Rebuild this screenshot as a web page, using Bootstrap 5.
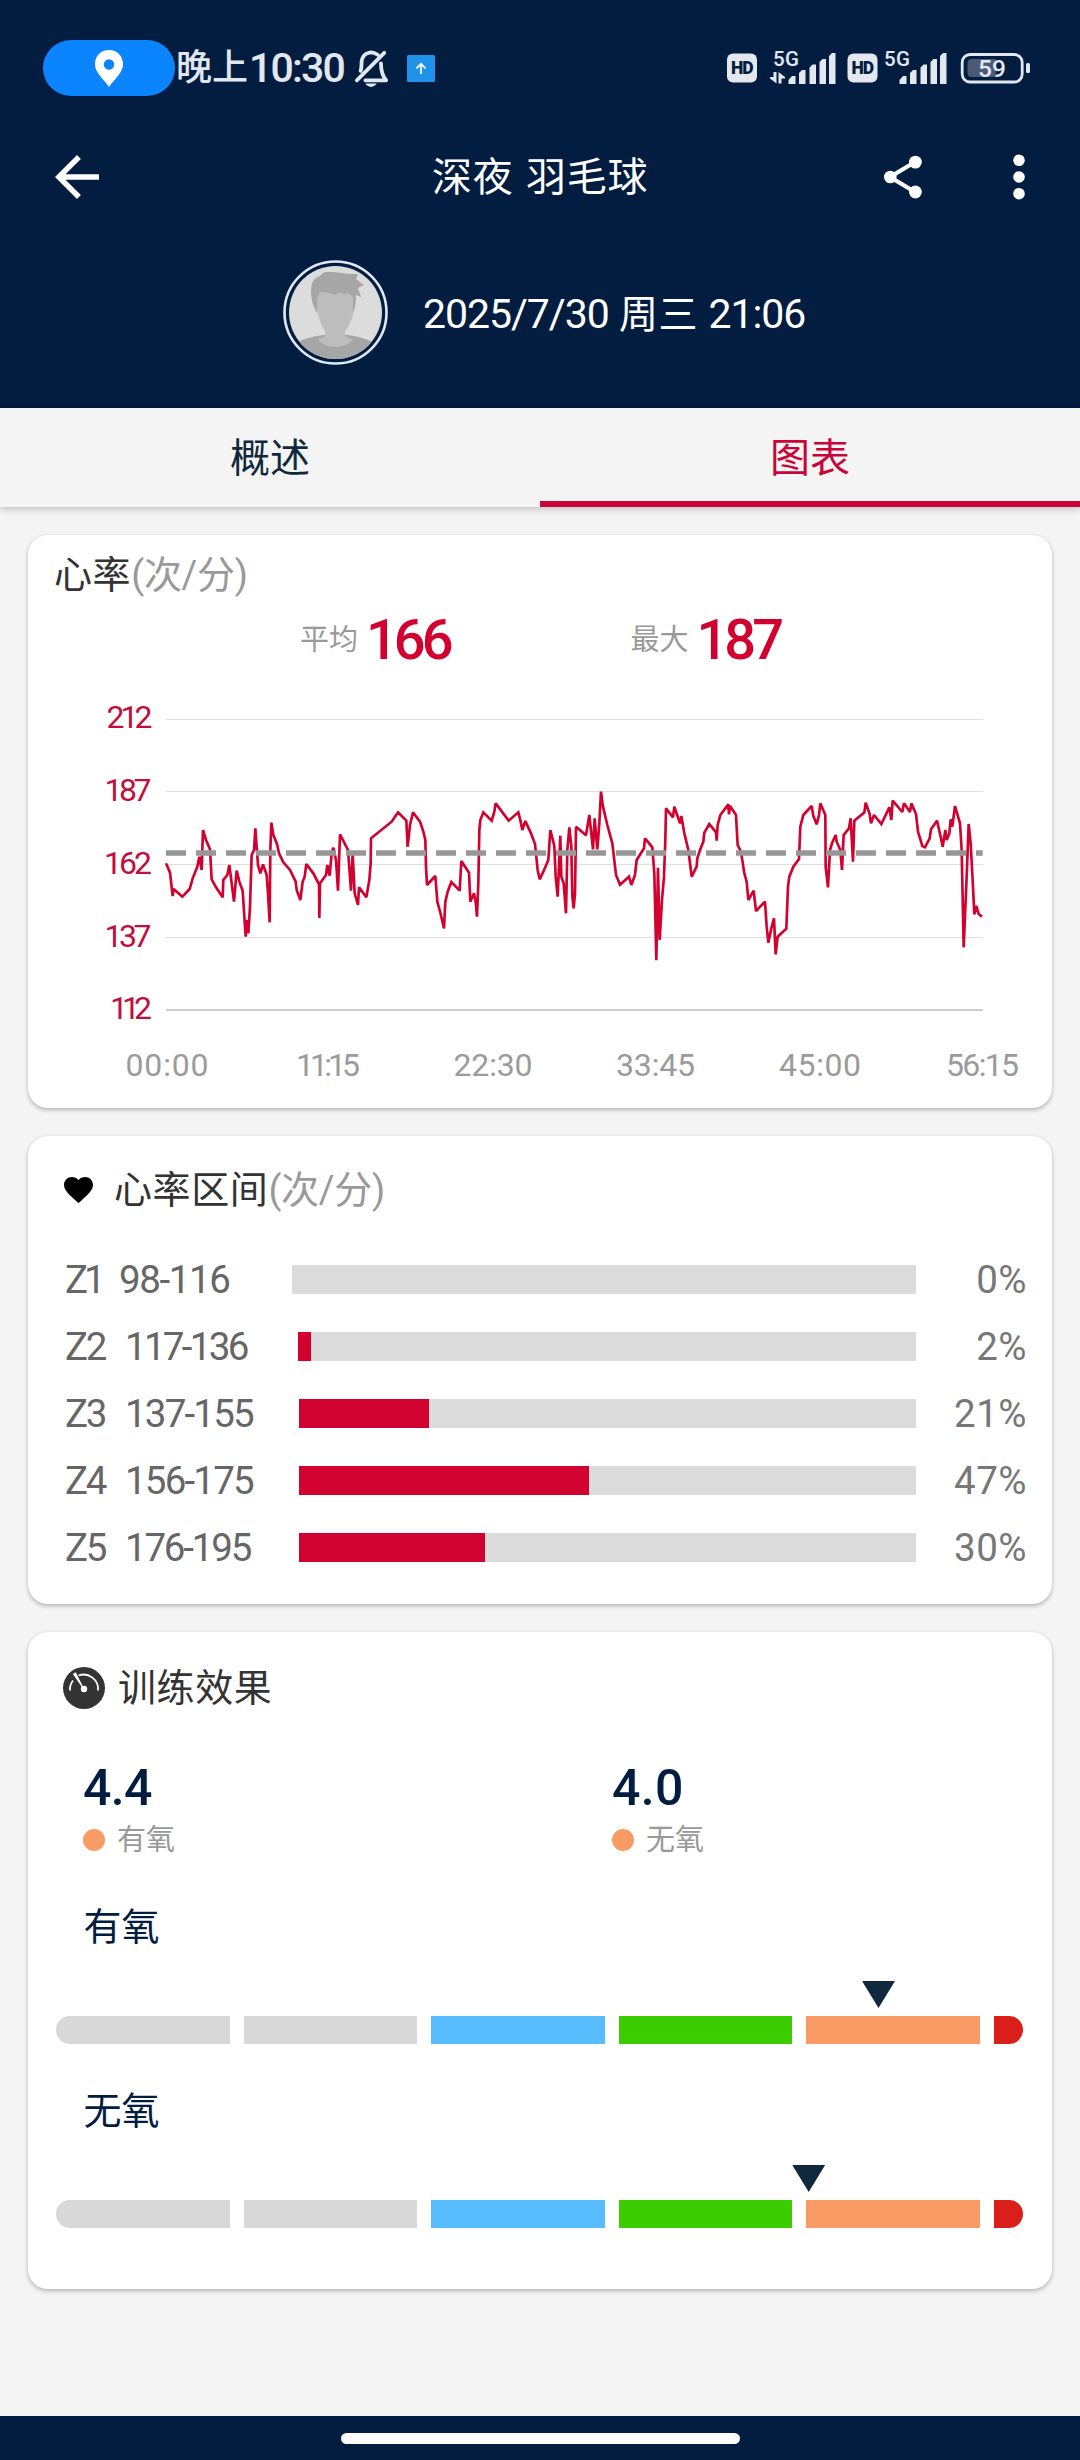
<!DOCTYPE html>
<html lang="zh-CN">
<head>
<meta charset="utf-8">
<meta name="viewport" content="width=device-width, initial-scale=1">
<title>深夜 羽毛球</title>
<link href="https://cdn.jsdelivr.net/npm/bootstrap@5.3.0/dist/css/bootstrap.min.css" rel="stylesheet">
<style>
  :root { --navy:#021d40; --crimson:#d1022f; --ink:#333; --mute:#999; }
  body { background:#f4f4f4; font-family:Roboto,"Noto Sans CJK SC",sans-serif; color:var(--ink); width:1080px; height:2460px; overflow:hidden; }
  svg { display:block; flex:none; overflow:visible; }
  .hero { background:var(--navy); height:408px; color:#fff; }
  .statusbar { height:136px; padding:0 50px 0 43px; color:#e2e7ef; }
  .loc-pill { width:132px; height:56px; border-radius:28px; background:#0a84ff; }
  .clock { font-size:36px; font-weight:500; line-height:44px; margin-left:1px; width:170px; white-space:nowrap; }
  .clock span { font-size:41px; letter-spacing:-1.8px; margin-left:1px; }
  .appbar { height:82px; padding:0 46px 0 44px; }
  .appbar-title { font-size:40px; line-height:48px; letter-spacing:.7px; word-spacing:2px; font-weight:400; margin-left:322px; padding-top:1px; }
  .profile { height:190px; padding:42px 0 0 283px; }
  .when { font-size:39px; line-height:48px; margin-left:35px; padding-top:30px; letter-spacing:.6px; }
  .when span { font-size:41px; letter-spacing:-1.05px; }
  .tabs .tab-item { height:99px; font-size:40px; line-height:101px; color:#10293c; }
  .tabs { box-shadow:0 2px 7px rgba(0,0,0,.22); background:#f4f4f4; height:99px; position:relative; }
  .tabs .tab-item.active { color:#cb0437; border-bottom:6px solid #cb0437; }
  .panels { padding:28px 28px 0; height:1909px; }
  .panel { background:#fff; border-radius:20px; box-shadow:0 2px 4px rgba(0,0,0,.26),0 0 2px rgba(0,0,0,.06); }
  .p-hr { height:573px; padding-top:18px; }
  .p-zone { height:468px; margin-top:28px; padding:32px 25px 0 37px; }
  .p-te { height:657px; margin-top:28px; padding:34px 29px 0 28px; }
  .ttl { font-size:38px; line-height:44px; letter-spacing:.6px; font-weight:400; }
  .unit { color:var(--mute); letter-spacing:-.3px; }
  .stats { height:84px; gap:181px; margin-top:1px; }
  .stats small { font-size:29px; color:var(--mute); line-height:40px; }
  .stats strong { font-size:56px; font-weight:500; color:var(--crimson); letter-spacing:-4px; line-height:60px; margin-left:8px; }
  .zrow { height:67px; font-size:38.5px; color:#666; line-height:44px; }
  .zrow span { padding-top:1px; }
  .zname { letter-spacing:-2.4px; width:60px; white-space:nowrap; }
  .zrange { letter-spacing:-1.8px; width:174px; white-space:nowrap; }
  .zrow.z1 .zname { width:54px; letter-spacing:-4px; } .zrow.z1 .zrange { width:173px; letter-spacing:-1.4px; }
  .zrow.z2 .zrange { width:173px; letter-spacing:-2.7px; }
  .zrow.z5 .zrange { letter-spacing:-2.2px; }
  .zbar { height:29px; background:#dbdbdb; }
  .zbar div { height:29px; background:var(--crimson); }
  .zpct { width:111px; text-align:right; color:#777; letter-spacing:.5px; }
  .te-item { width:529px; }
  .te-val { font-size:50px; font-weight:500; line-height:60px; color:var(--navy); letter-spacing:-.6px; }
  .te-item + div .te-val { letter-spacing:.4px; }
  .te-sub { font-size:29px; line-height:40px; color:var(--mute); margin-top:1px; gap:12px; padding-top:1px; }
  .te-dot { width:22px; height:22px; border-radius:50%; background:#f89b65; }
  .te-name { color:var(--navy); font-size:38px; line-height:44px; padding-left:27.5px; }
  .meter { gap:14px; margin-top:8px; }
  .meter div { height:28px; flex:1 1 0; }
  .meter div:first-child { border-radius:14px 0 0 14px; }
  .meter div:last-child { flex:0 0 29px; background:#da1e19; border-radius:0 14px 14px 0; }
  .s-gray { background:#d8d8d8; } .s-blue { background:#57bdff; } .s-green { background:#3ccd00; } .s-orange { background:#f99a65; }
  .pointer { width:33px; height:27px; background:#10293c; clip-path:polygon(0 0,100% 0,50% 100%); margin-top:32px; transform:translateX(-50%); }
  .navbar-home { height:44px; background:var(--navy); padding-top:17px; }
  .navbar-home div { width:399px; height:11px; border-radius:6px; background:#fff; }
</style>
</head>
<body>
<header class="hero">
  <div class="statusbar d-flex align-items-center">
    <div class="loc-pill d-flex align-items-center justify-content-center">
      <svg width="28" height="37" viewBox="0 0 28 37"><path fill="#fff" fill-rule="evenodd" d="M14 0C6 0 0 6 0 14c0 9 8 14 14 23C20 28 28 23 28 14 28 6 22 0 14 0zm0 9.300a5.200 5.200 0 1 1 0 10.400 5.200 5.200 0 0 1 0-10.400z"/></svg>
    </div>
    <div class="clock d-flex align-items-center">晚上<span>10:30</span></div>
    <svg class="ms-2" width="35" height="38" viewBox="0 0 37 40" fill="none" stroke="#e2e7ef" stroke-width="4" stroke-linecap="round" stroke-linejoin="round"><path d="M3 33L32 4M7 23c1-3 1-5 1-8C8 8 12 4 18 3.500c3 0 5 1 7 2.500M28.500 15c0 8 1 13 5.500 18H12"/><path fill="#e2e7ef" stroke="none" d="M12 36.500h12c-1 2-3.500 3.500-6 3.500s-5-1.500-6-3.500z"/></svg>
    <svg style="margin-left:18px" width="28" height="27" viewBox="0 0 28 27"><rect width="28" height="27" rx="1.500" fill="#1f93e9"/><path d="M14 19V9M9.500 13.300L14 8.800l4.500 4.500" fill="none" stroke="#fff" stroke-width="1.700"/></svg>
    <svg class="ms-auto" width="303" height="40" viewBox="727 48 303 40" fill="#e4e8ee">
      <rect x="727" y="53.500" width="30" height="29" rx="6"/>
      <rect x="847.500" y="53.500" width="30" height="29" rx="6"/>
      <g font-family="Roboto" font-weight="900" font-size="17.500" fill="#021d40"><text x="731" y="74" textLength="22.500">HD</text><text x="851.500" y="74" textLength="22.500">HD</text></g>
      <g font-family="Roboto" font-weight="500" font-size="20.500"><text x="773" y="66" textLength="26">5G</text><text x="884" y="66" textLength="26">5G</text></g>
      <path d="M773.500 72h3v11.500l-6.500-5v-1.500h3.500zM778.500 72l6.500 5v1.500h-3.500v5h-3z"/>
      <g id="bars"><path d="M788.500 84v-4l3.500-4h3.500v8zM799 84V73l3-3h3.500v14zM809.500 84V67.500l3-3h3.500V84zM819.500 84V62l3-3h3.500v25zM829 84V56l3-3h3.500v31z"/></g>
      <use href="#bars" x="111"/>
      <rect x="962.200" y="54.500" width="60" height="27.500" rx="8" fill="none" stroke="#e4e8ee" stroke-width="2.800"/>
      <path d="M971.500 59H996v18h-24.500a4 4 0 0 1-4-4V63a4 4 0 0 1 4-4z" fill="#4b5a76"/>
      <rect x="1026" y="63" width="4" height="10" rx="1.500"/>
      <text x="978" y="77" font-family="Roboto" font-weight="500" font-size="24.500" textLength="28">59</text>
    </svg>
  </div>
  <div class="appbar d-flex align-items-center">
    <svg width="66" height="66" viewBox="0 0 24 24" fill="#fff"><path d="M20 11H7.830l5.590-5.590L12 4l-8 8 8 8 1.410-1.410L7.830 13H20z"/></svg>
    <h1 class="appbar-title mb-0">深夜 羽毛球</h1>
    <svg class="ms-auto" width="38" height="44" viewBox="0 0 38 44"><g fill="#fff"><circle cx="6.300" cy="22" r="6.300"/><circle cx="31.400" cy="7.100" r="6.400"/><circle cx="31.400" cy="37" r="6.400"/></g><path d="M31 7L6 22l25 15" fill="none" stroke="#fff" stroke-width="4.200"/></svg>
    <svg style="margin-left:82px" width="30" height="46" viewBox="0 0 30 46" fill="#fff"><circle cx="15" cy="6.300" r="5.800"/><circle cx="15" cy="23" r="5.800"/><circle cx="15" cy="39.700" r="5.800"/></svg>
  </div>
  <div class="profile d-flex">
    <svg width="105" height="105" viewBox="0 0 105 105">
      <clipPath id="face"><circle cx="52.500" cy="52.500" r="46.500"/></clipPath>
      <circle cx="52.500" cy="52.500" r="51" fill="none" stroke="#dfe9f6" stroke-width="2.600"/>
      <g clip-path="url(#face)">
        <rect width="105" height="105" fill="#dcdcdc"/>
        <path fill="#a6a6a6" d="M10 85c8-6 18-8 30-10h25c12 2 20 4 30 10v20H10z"/>
        <path fill="#bdbdbd" d="M33 35c0-5 5-10 19-10s20 4 20 12c0 14-3 26-10 34v5c2 2 5 2 8 3-3 5-10 8-18 8s-14-3-17-8c2-1 5-1 7-3v-5C36 62 33 50 33 35z"/>
        <path fill="#a6a6a6" d="M34 53c-3-5-6-12-6-22 0-9 3-13 9-15 3-5 7-4 13-4 8 1 15 2 25 2l-2 5 8 6-6 3 3 9-5-2c0 8-1 13-3 18V37c-2-2-4-4-7-4l-1 2c-3-2-5-3-8-2l-1 2c-5-2-10-3-16-3-3 4-3 11-3 21z"/>
      </g>
    </svg>
    <div class="when"><span>2025/7/30</span> 周三 <span>21:06</span></div>
  </div>
</header>
<nav class="tabs d-flex text-center">
  <div class="tab-item w-50">概述</div>
  <div class="tab-item active w-50">图表</div>
</nav>
<main class="panels">
  <section class="panel p-hr">
    <h2 class="ttl mb-0" style="padding-left:26px">心率<span class="unit">(次/分)</span></h2>
    <div class="stats d-flex justify-content-center">
      <div class="d-flex align-items-center"><small>平均</small><strong>166</strong></div>
      <div class="d-flex align-items-center"><small>最大</small><strong>187</strong></div>
    </div>
    <svg width="1024" height="426" viewBox="28 682 1024 426">
      <g stroke="#dfe1e1" stroke-width="1" shape-rendering="crispEdges"><path d="M166 719.500H982.700M166 791.500H982.700M166 864.500H982.700M166 937.500H982.700"/></g>
      <path d="M166 1010H982.700" stroke="#cbcbcb" stroke-width="2"/>
      <g font-family="Roboto" font-size="32" fill="#c30d3b">
        <text x="106.500" y="728" textLength="46">212</text>
        <text x="104.500" y="801" textLength="47">187</text>
        <text x="104" y="874" textLength="48">162</text>
        <text x="104.500" y="947" textLength="47">137</text>
        <text x="110" y="1019" textLength="42">112</text>
      </g>
      <g font-family="Roboto" font-size="32" fill="#9b9b9b">
        <text x="125.500" y="1076" textLength="83">00:00</text>
        <text x="296" y="1076" textLength="64">11:15</text>
        <text x="453.500" y="1076" textLength="79">22:30</text>
        <text x="616" y="1076" textLength="79">33:45</text>
        <text x="779" y="1076" textLength="82">45:00</text>
        <text x="946" y="1076" textLength="73">56:15</text>
      </g>
      <g transform="translate(80 690) scale(.33333)" fill="none" stroke="#d1022f" stroke-width="8" stroke-miterlimit="2">
        <polyline points="258,520 270,548 278,618 281,597 307,620 329,597 338,565 352,530 358,500 365,540 369,420 378,450 390,478 395,568 408,592 428,622 430,570 442,555 448,525 462,635 470,542 478,575 488,602 497,740 502,690 505,730 510,650 515,495 522,480 526,415 534,525 541,550 549,523 560,555 564,610 569,697 571,480 574,398 580,435 591,462 597,490 610,517 630,540 647,575 650,600 661,630 668,575 674,560 679,522 700,550 717,583 718,684 720,580 738,555 742,525 749,557 755,490 760,473 768,510 774,602 780,433 804,480 813,602 818,490 824,610 834,645 837,592 859,622 868,570 872,520 873,445 935,395 954,367 979,392 983,470"/>
        <polyline transform="translate(870 0)" points="113,470 120,405 129,367 150,395 160,425 166,450 168,530 171,585 196,558 202,635 212,672 222,715 226,635 233,605 244,576 269,602 274,513 297,548 301,635 312,610 317,635 321,680 325,580 328,420 331,390 340,367 365,392 373,365 377,340 416,392 445,367 452,395 457,420 466,393 483,430 495,462 503,540 509,568 520,545 535,510 541,420 553,468 557,560 563,620 571,437 574,560 581,580 588,670 592,480 598,412 604,470 607,620 611,655 615,610 618,410 648,436 658,375 669,478 674,385 682,478 688,400 693,305 699,350 712,405 727,460 738,555 750,584 777,560 784,585 795,555 800,510 822,475 825,445 847,472 853,550 859,811 864,533 869,750 876,630 882,560 886,450 888,355 909,382 913,350"/>
        <polyline transform="translate(1770 0)" points="13,350 30,400 34,378 43,430 55,480 65,560 80,530 82,505 90,480 100,455 103,428 118,402 138,427 140,452 143,405 151,375 175,343 177,373 180,348 198,375 203,465 213,485 223,550 230,575 235,630 251,602 258,663 285,635 290,710 295,758 304,715 312,685 317,793 323,740 349,716 354,590 358,560 370,530 387,507 391,410 400,375 425,348 430,378 440,403 447,375 451,340 466,375 467,530 474,592 480,480 486,460 497,435 500,455 511,480 516,540 521,435 537,415 542,385 549,515 553,392 583,368 587,338 599,372 603,400 612,375 634,402 658,352 664,390 668,332 697,366 702,340 720,366 724,340 738,372 744,425 757,468 765,472 779,445 783,418 801,392 812,440 818,470 826,420 830,450 838,430 842,388 847,410 855,348 870,400 875,480 881,772 890,560 896,402 902,460 908,570 913,673 919,648 926,672 936,680"/>
      </g>
      <path d="M166 853H982.700" stroke="#979797" stroke-width="5.500" stroke-dasharray="20 10"/>
    </svg>
  </section>

  <section class="panel p-zone">
    <h2 class="ttl d-flex align-items-center" style="margin-bottom:34px">
      <svg style="margin:0 21px 0 -1px" width="29" height="26" viewBox="2 3 20 18.350" preserveAspectRatio="none"><path d="M12 21.350l-1.450-1.320C5.400 15.360 2 12.280 2 8.500 2 5.420 4.420 3 7.500 3c1.740 0 3.410.81 4.500 2.090C13.090 3.810 14.760 3 16.500 3 19.580 3 22 5.420 22 8.500c0 3.780-3.400 6.860-8.550 11.540z"/></svg>
      心率区间<span class="unit">(次/分)</span>
    </h2>
    <div class="zrow z1 d-flex align-items-center"><span class="zname">Z1</span><span class="zrange">98-116</span><div class="zbar flex-grow-1"></div><span class="zpct">0%</span></div>
    <div class="zrow z2 d-flex align-items-center"><span class="zname">Z2</span><span class="zrange">117-136</span><div class="zbar flex-grow-1"><div style="width:2.1%"></div></div><span class="zpct">2%</span></div>
    <div class="zrow d-flex align-items-center"><span class="zname">Z3</span><span class="zrange">137-155</span><div class="zbar flex-grow-1"><div style="width:21.1%"></div></div><span class="zpct">21%</span></div>
    <div class="zrow d-flex align-items-center"><span class="zname">Z4</span><span class="zrange">156-175</span><div class="zbar flex-grow-1"><div style="width:47%"></div></div><span class="zpct">47%</span></div>
    <div class="zrow z5 d-flex align-items-center"><span class="zname">Z5</span><span class="zrange">176-195</span><div class="zbar flex-grow-1"><div style="width:30.1%"></div></div><span class="zpct">30%</span></div>
  </section>

  <section class="panel p-te">
    <h2 class="ttl d-flex align-items-center mb-0">
      <svg style="margin:0 13px 0 7px" width="42" height="42" viewBox="0 0 42 42"><circle cx="21" cy="21" r="21" fill="#333"/><path d="M7 23.500a14.200 14.200 0 0 1 3-10M15.500 8.500A14.500 14.500 0 0 1 35 23.500" fill="none" stroke="#fff" stroke-width="1.800"/><path d="M10.500 7l9 13M10.500 7l2-1 7 14" stroke="#fff" stroke-width="1.200" fill="#fff"/><circle cx="21" cy="22" r="3.200" fill="#fff"/></svg>
      训练效果
    </h2>
    <div class="d-flex" style="padding-left:27px;margin-top:48px">
      <div class="te-item flex-shrink-0"><div class="te-val">4.4</div><div class="te-sub d-flex align-items-center"><span class="te-dot"></span>有氧</div></div>
      <div><div class="te-val">4.0</div><div class="te-sub d-flex align-items-center"><span class="te-dot"></span>无氧</div></div>
    </div>
    <div class="te-name" style="margin-top:45px">有氧</div>
    <div class="pointer" style="margin-left:85.060%"></div>
    <div class="meter d-flex"><div class="s-gray"></div><div class="s-gray"></div><div class="s-blue"></div><div class="s-green"></div><div class="s-orange"></div><div></div></div>
    <div class="te-name" style="margin-top:45px">无氧</div>
    <div class="pointer" style="margin-left:77.840%"></div>
    <div class="meter d-flex"><div class="s-gray"></div><div class="s-gray"></div><div class="s-blue"></div><div class="s-green"></div><div class="s-orange"></div><div></div></div>
  </section>
</main>
<footer class="navbar-home"><div class="mx-auto"></div></footer>
<script src="https://cdn.jsdelivr.net/npm/bootstrap@5.3.0/dist/js/bootstrap.bundle.min.js"></script>
</body>
</html>
